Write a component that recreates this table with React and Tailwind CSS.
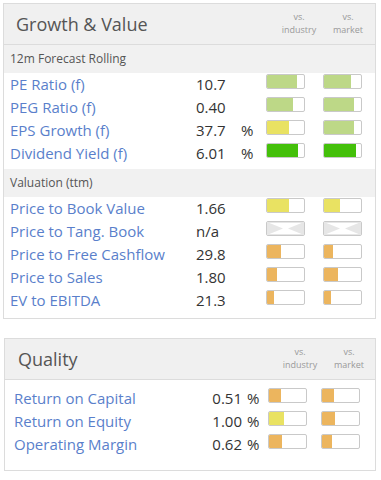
import React from "react";

const C = {
  lg: "bg-[#bdd887]",
  y: "bg-[#e9e262]",
  g: "bg-[#44c00a]",
  o: "bg-[#ecb55e]",
};

function Bar({ v, c }) {
  if (v == null) {
    return (
      <div className="w-[39px] h-[15px] border border-[#c9c9c9] rounded-[2px] bg-white overflow-hidden">
        <svg width="37" height="13" viewBox="0 0 37 13" className="block">
          <polygon points="0,0 16,6.5 0,13" fill="#e6e6e6" />
          <polygon points="37,0 21,6.5 37,13" fill="#e6e6e6" />
          <polygon points="0,0 37,0 37,1 0,1" fill="#e6e6e6" />
          <polygon points="0,12 37,12 37,13 0,13" fill="#e6e6e6" />
        </svg>
      </div>
    );
  }
  return (
    <div className="w-[39px] h-[15px] border border-[#c9c9c9] rounded-[2px] bg-white overflow-hidden">
      <div className={`h-full ${c}`} style={{ width: `${v * 100}%` }} />
    </div>
  );
}

function Row1({ label, value, pct, a, ac, b, bc }) {
  return (
    <div className="flex items-start h-[23px]">
      <div className="w-[192px] pl-[6px] text-[15px] leading-[23px] text-[#5a7fcb]">{label}</div>
      <div className="w-[45px] text-[15px] leading-[23px] text-[#333]">{value}</div>
      <div className="w-[25px] text-[15px] leading-[23px] text-[#333]">{pct ? "%" : ""}</div>
      <div className="mt-[1px] w-[57px]">
        <Bar v={a} c={ac} />
      </div>
      <div className="mt-[1px]">
        <Bar v={b} c={bc} />
      </div>
    </div>
  );
}

function Row2({ label, value, a, ac, b, bc }) {
  return (
    <div className="flex items-start h-[23px]">
      <div className="w-[187px] pl-[9px] text-[15px] leading-[23px] text-[#5a7fcb]">{label}</div>
      <div className="w-[50px] text-right text-[15px] leading-[23px] text-[#333]">{value}</div>
      <div className="w-[26px] pl-[5px] text-[15px] leading-[23px] text-[#333]">%</div>
      <div className="mt-[1px] w-[53px]">
        <Bar v={a} c={ac} />
      </div>
      <div className="mt-[1px]">
        <Bar v={b} c={bc} />
      </div>
    </div>
  );
}

function VsLabels() {
  return (
    <div className="flex text-[9px] leading-[13px] text-[#9a9a9a] text-center pt-[6px]">
      <div className="w-[50px] flex flex-col">
        <span>vs.</span>
        <span>industry</span>
      </div>
      <div className="w-[50px] ml-[-1px] flex flex-col">
        <span>vs.</span>
        <span>market</span>
      </div>
    </div>
  );
}

export default function App() {
  return (
    <div className="w-[381px] h-[480px] bg-white" style={{ fontFamily: '"Open Sans", sans-serif' }}>
      <div className="h-[3px]" />
      <div className="ml-[3px] w-[373px] border border-[#dcdcdc]">
        <div className="flex justify-between items-start h-[41px] bg-[#f0f0f0] border-b border-[#dcdcdc]">
          <div className="pl-[12px] text-[18px] leading-[41px] text-[#555]">Growth &amp; Value</div>
          <div className="pr-[2px]"><VsLabels /></div>
        </div>
        <div className="h-[28px] bg-[#f1f1f1] pl-[6px] text-[12px] leading-[28px] text-[#555]">12m Forecast Rolling</div>
        <Row1 label="PE Ratio (f)" value="10.7" a={0.8} ac={C.lg} b={0.72} bc={C.lg} />
        <Row1 label="PEG Ratio (f)" value="0.40" a={0.7} ac={C.lg} b={0.8} bc={C.lg} />
        <Row1 label="EPS Growth (f)" value="37.7" pct a={0.6} ac={C.y} b={0.8} bc={C.lg} />
        <Row1 label="Dividend Yield (f)" value="6.01" pct a={0.83} ac={C.g} b={0.86} bc={C.g} />
        <div className="h-[4px]" />
        <div className="h-[28px] bg-[#f1f1f1] pl-[6px] text-[12px] leading-[28px] text-[#555]">Valuation (ttm)</div>
        <Row1 label="Price to Book Value" value="1.66" a={0.6} ac={C.y} b={0.43} bc={C.y} />
        <Row1 label="Price to Tang. Book" value="n/a" a={null} b={null} />
        <Row1 label="Price to Free Cashflow" value="29.8" a={0.38} ac={C.o} b={0.25} bc={C.o} />
        <Row1 label="Price to Sales" value="1.80" a={0.27} ac={C.o} b={0.38} bc={C.o} />
        <Row1 label="EV to EBITDA" value="21.3" a={0.19} ac={C.o} b={0.2} bc={C.o} />
        <div className="h-[6px]" />
      </div>

      <div className="h-[19px]" />
      <div className="ml-[4px] w-[372px] border border-[#dcdcdc]">
        <div className="flex justify-between items-start h-[41px] bg-[#f0f0f0] border-b border-[#dcdcdc]">
          <div className="pl-[13px] text-[18px] leading-[41px] text-[#555]">Quality</div>
          <div className="pr-[1px]"><VsLabels /></div>
        </div>
        <div className="h-[7px]" />
        <Row2 label="Return on Capital" value="0.51" a={0.33} ac={C.o} b={0.33} bc={C.o} />
        <Row2 label="Return on Equity" value="1.00" a={0.4} ac={C.y} b={0.36} bc={C.o} />
        <Row2 label="Operating Margin" value="0.62" a={0.36} ac={C.o} b={0.28} bc={C.o} />
        <div className="h-[14px]" />
      </div>
    </div>
  );
}
